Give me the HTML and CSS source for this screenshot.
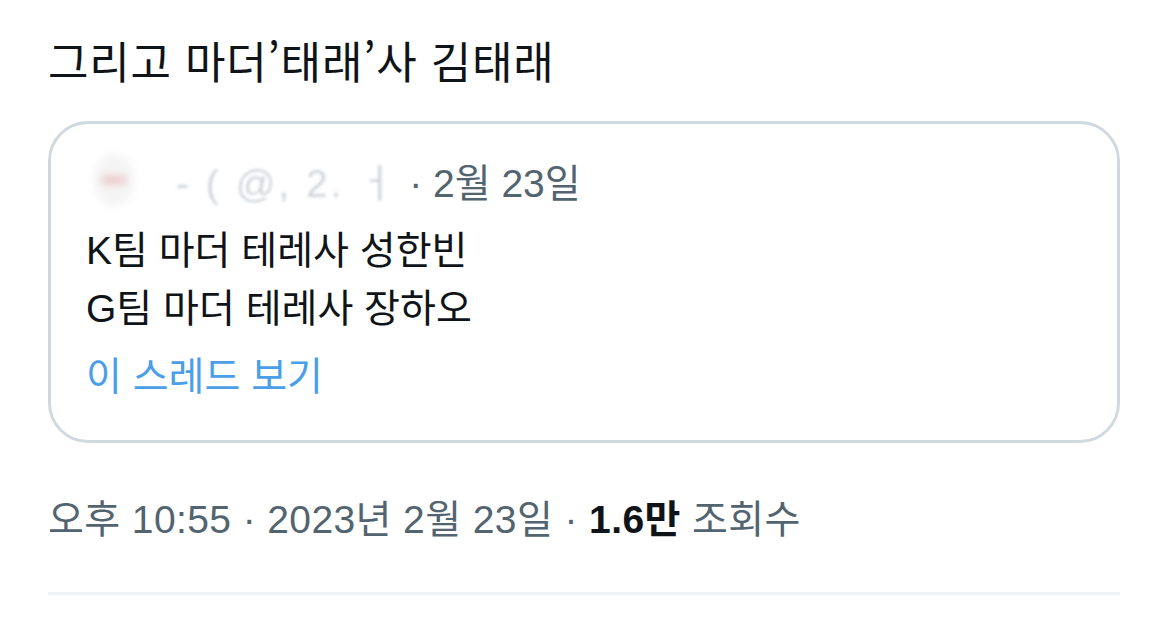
FILE: index.html
```html
<!DOCTYPE html>
<html lang="ko">
<head>
<meta charset="UTF-8">
<meta name="viewport" content="width=device-width, initial-scale=1.0">
<title>Tweet</title>
<link rel="stylesheet" href="styles.css">
</head>
<body>

<!-- Tweet -->
<div class="tweet">
    <p class="tweet-text">그리고 마더’태래’사 김태래</p>

    <!-- Quoted tweet -->
    <div class="quote">
        <div class="quote-head">
            <span class="avatar"><span class="avatar-mark"></span></span>
            <span class="author">- ( @, 2. ㅓ</span>
            <span class="quote-date">· 2월 23일</span>
        </div>
        <p class="quote-text">K팀 마더 테레사 성한빈<br>G팀 마더 테레사 장하오</p>
        <a class="thread-link" href="#">이 스레드 보기</a>
    </div>

    <div class="meta">
        오후 10:55 · 2023년 2월 23일 · <b>1.6만</b> 조회수
    </div>
    <div class="divider"></div>
</div>

</body>
</html>
```

FILE: styles.css
```css
/* General Styles */
* {
    margin: 0;
    padding: 0;
    box-sizing: border-box;
}

body {
    background: #fff;
    font-family: "Liberation Sans", "Noto Sans CJK KR", sans-serif;
    color: #0f1419;
}

.tweet {
    width: 1072px;
    margin-left: 48px;
    padding-top: 34px;
}

/* Main text */
.tweet-text {
    font-family: "Noto Sans CJK KR", sans-serif;
    font-size: 44px;
    line-height: 52px;
    letter-spacing: 0.8px;
}

/* Quote card */
.quote {
    margin-top: 35px;
    border: 3px solid #cfd9de;
    border-radius: 40px;
    padding: 30px 35px 37px;
}

.quote-head {
    display: flex;
    align-items: center;
    height: 52px;
    font-size: 39px;
}

.avatar {
    width: 40px;
    height: 54px;
    margin-left: 8px;
    border-radius: 50%;
    background: #f4f4f4;
    filter: blur(4px);
    display: flex;
    align-items: center;
    justify-content: center;
}

.avatar-mark {
    width: 24px;
    height: 4px;
    background: #e49a9a;
}

.author {
    color: #a9b3bb;
    filter: blur(1.5px);
    opacity: 0.55;
    margin-left: 42px;
    letter-spacing: 3px;
    white-space: nowrap;
}

.quote-date {
    color: #536471;
    margin-left: 12px;
}

.quote-text {
    margin-top: 16px;
    font-size: 39px;
    line-height: 58px;
}

.thread-link {
    display: block;
    margin-top: 13px;
    font-size: 39px;
    line-height: 52px;
    color: #4a9fe8;
    text-decoration: none;
}

/* Meta line */
.meta {
    margin-top: 51px;
    font-size: 39px;
    line-height: 52px;
    letter-spacing: 0.4px;
    color: #536471;
}

.meta b {
    color: #0f1419;
}

.divider {
    margin-top: 46px;
    height: 3px;
    background: #eff3f4;
}
```
